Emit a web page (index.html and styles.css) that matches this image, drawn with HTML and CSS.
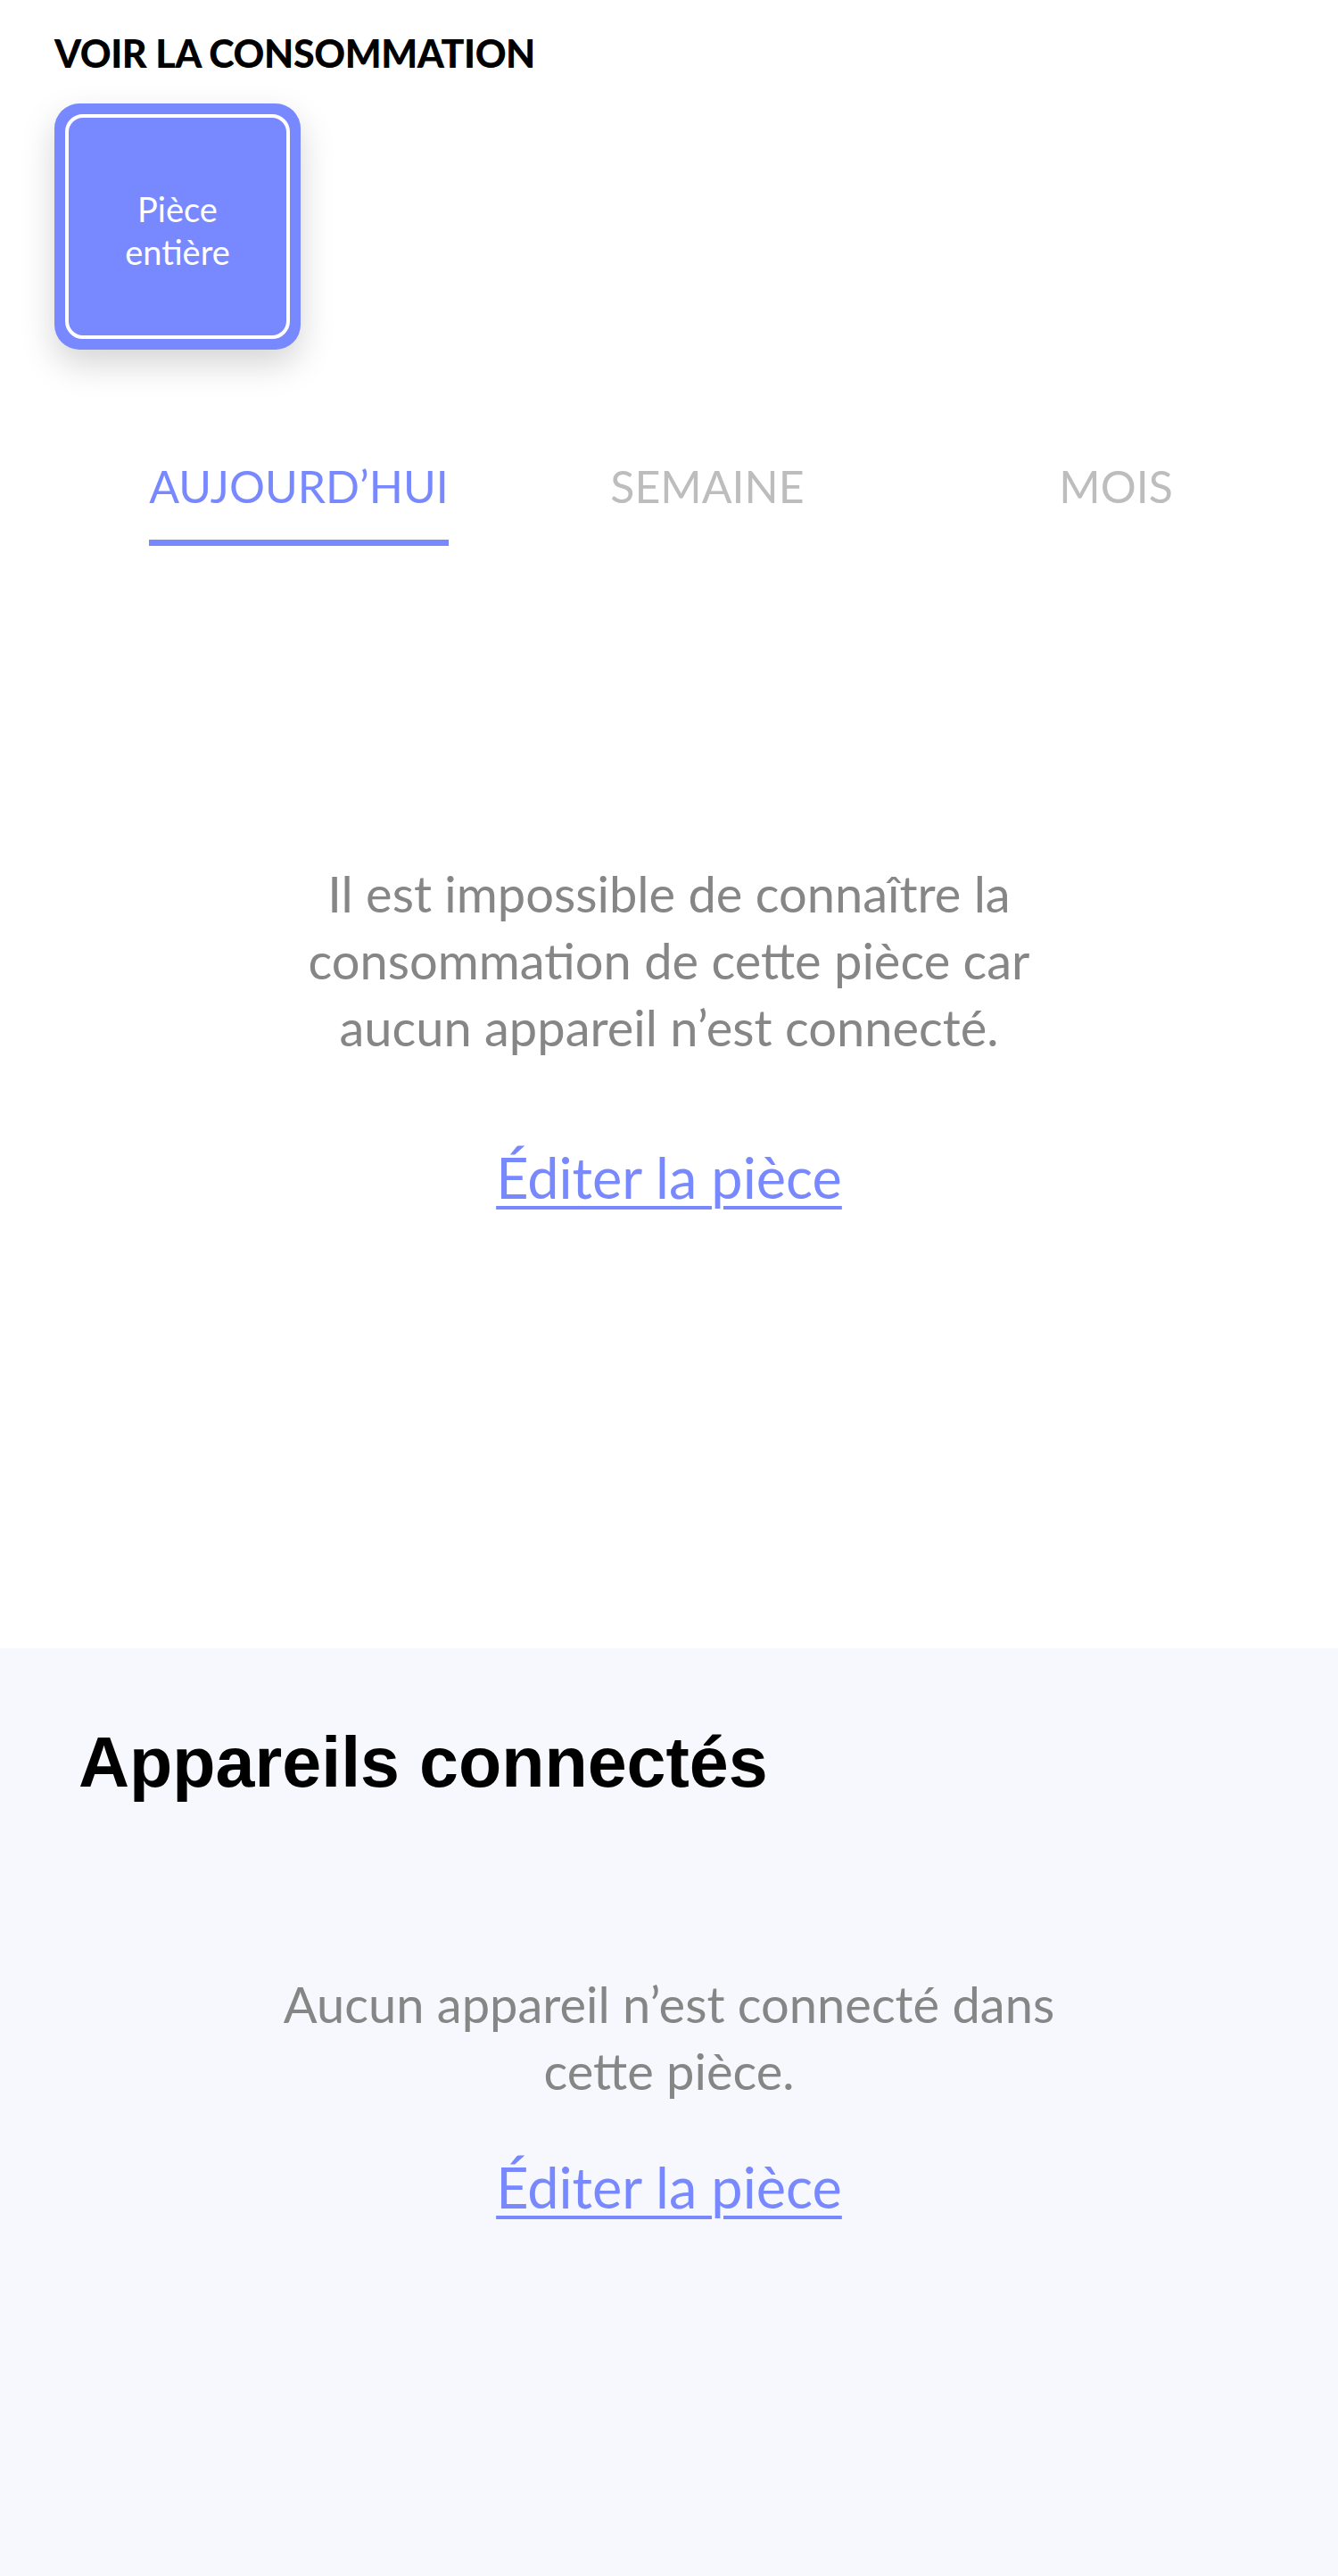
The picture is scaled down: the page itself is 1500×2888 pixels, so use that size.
FILE: index.html
```html
<!DOCTYPE html>
<html lang="fr">
<head>
<meta charset="utf-8">
<title>Pièce</title>
<link rel="stylesheet" href="styles.css">
</head>
<body>
<div class="page">
  <section class="consumption">
    <h2 class="eyebrow">VOIR LA CONSOMMATION</h2>
    <div class="filters">
      <button class="filter-card is-active" type="button">
        <span class="filter-inner">Pièce<br>entière</span>
      </button>
    </div>
    <nav class="tabs">
      <div class="tab is-active"><span class="tab-label">AUJOURD’HUI</span></div>
      <div class="tab"><span class="tab-label">SEMAINE</span></div>
      <div class="tab"><span class="tab-label">MOIS</span></div>
    </nav>
    <div class="empty empty-consumption">
      <p class="empty-text">Il est impossible de connaître la<br>consommation de cette pièce car<br>aucun appareil n’est connecté.</p>
      <a class="edit-link" href="#">Éditer la pièce</a>
    </div>
  </section>
  <section class="devices">
    <h2 class="devices-title">Appareils connectés</h2>
    <div class="empty empty-devices">
      <p class="empty-text">Aucun appareil n’est connecté dans<br>cette pièce.</p>
      <a class="edit-link" href="#">Éditer la pièce</a>
    </div>
  </section>
</div>
</body>
</html>
```
FILE: styles.css
```css
* { box-sizing: border-box; }
html, body { margin: 0; padding: 0; background: #ffffff; }
body { font-family: "Lato", "Noto Sans", sans-serif; color: #000; }

.page { width: 1500px; }

.consumption {
  height: 1848px;
  padding: 38px 0 0 0;
}

.eyebrow {
  margin: 0 0 0 61px;
  font-family: "Lato", sans-serif;
  font-weight: 900;
  font-size: 43px;
  line-height: 43px;
  letter-spacing: -0.4px;
  color: #000;
}

.filters {
  display: flex;
  margin: 35px 0 0 61px;
}

.filter-card {
  width: 276px;
  height: 276px;
  padding: 12px;
  border: 0;
  border-radius: 28px;
  background: #7888ff;
  box-shadow: 0 16px 38px rgba(0, 0, 0, 0.17);
  display: flex;
  cursor: pointer;
}

.filter-inner {
  flex: 1;
  display: flex;
  align-items: center;
  justify-content: center;
  text-align: center;
  padding-top: 7px;
  border: 4px solid #ffffff;
  border-radius: 20px;
  color: #ffffff;
  font-family: "Lato", sans-serif;
  font-size: 38px;
  line-height: 48px;
  font-weight: 400;
}

.tabs {
  display: grid;
  grid-template-columns: repeat(3, 458px);
  padding-left: 106px;
  margin-top: 128px;
}

.tab {
  display: flex;
  justify-content: center;
}

.tab-label {
  font-family: "Lato", sans-serif;
  font-size: 50px;
  line-height: 50px;
  color: #bdbdbd;
  padding-bottom: 35px;
  border-bottom: 7px solid transparent;
}

.tab.is-active .tab-label {
  color: #7888ff;
  border-bottom-color: #7888ff;
}

.empty {
  display: flex;
  flex-direction: column;
  align-items: center;
  text-align: center;
}

.empty-text {
  margin: 0;
  font-size: 56px;
  line-height: 75px;
  color: #868686;
}

.edit-link {
  font-size: 63px;
  line-height: 75px;
  color: #7888ff;
  text-decoration: underline;
  text-decoration-thickness: 4px;
  text-underline-offset: 8px;
}

.empty-consumption { margin-top: 352px; }
.empty-consumption .edit-link { margin-top: 93px; }

.devices {
  background: #f7f8fe;
  height: 1040px;
  padding: 88px 0 0 88px;
}

.devices-title {
  margin: 0;
  font-family: "Liberation Sans", Arial, sans-serif;
  font-weight: 700;
  font-size: 79px;
  line-height: 79px;
  color: #000;
}

.empty-devices { margin: 194px 0 0 -88px; }
.empty-devices .edit-link { margin-top: 55px; }
```
